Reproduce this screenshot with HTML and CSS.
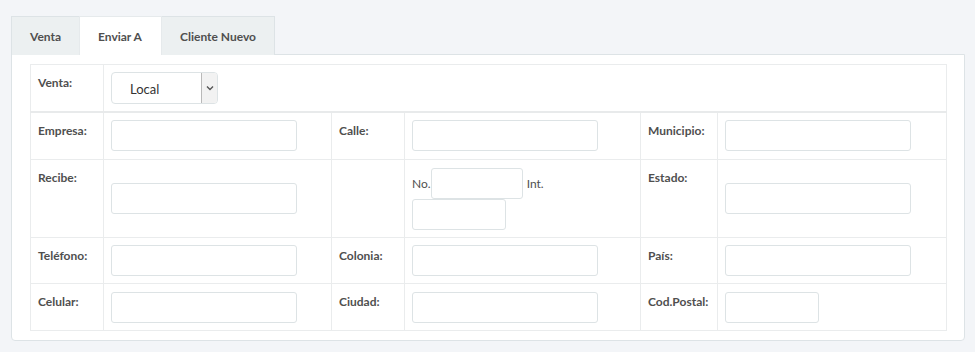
FILE: index.html
```html
<!DOCTYPE html>
<html lang="es">
<head>
  <meta charset="UTF-8" />
  <title>Enviar A</title>
  <link rel="stylesheet" href="styles.css">
</head>
<body>
  <div class="tabs">
    <div class="tab">Venta</div>
    <div class="tab active">Enviar A</div>
    <div class="tab">Cliente Nuevo</div>
  </div>

  <div class="panel">
    <table class="form-table">
      <colgroup>
        <col class="c-label">
        <col class="c-field">
        <col class="c-label">
        <col class="c-field2">
        <col class="c-label3">
        <col class="c-field3">
      </colgroup>
      <tr class="first">
        <td class="lbl">Venta:</td>
        <td colspan="5">
          <div class="select">
            <span class="select-value">Local</span>
            <span class="select-btn">
              <svg width="8" height="6" viewBox="0 0 8 6"><path d="M1 1.5 L4 4.5 L7 1.5" fill="none" stroke="#555" stroke-width="1.4"/></svg>
            </span>
          </div>
        </td>
      </tr>
      <tr class="r2">
        <td class="lbl">Empresa:</td>
        <td><input type="text" class="inp"></td>
        <td class="lbl">Calle:</td>
        <td><input type="text" class="inp"></td>
        <td class="lbl">Municipio:</td>
        <td><input type="text" class="inp"></td>
      </tr>
      <tr class="r3">
        <td class="lbl">Recibe:</td>
        <td><input type="text" class="inp"></td>
        <td class="lbl"></td>
        <td class="num">
          <div class="num-line">No.<input type="text" class="inp sm no">Int.</div>
          <input type="text" class="inp sm">
        </td>
        <td class="lbl">Estado:</td>
        <td><input type="text" class="inp"></td>
      </tr>
      <tr class="r4">
        <td class="lbl">Teléfono:</td>
        <td><input type="text" class="inp"></td>
        <td class="lbl">Colonia:</td>
        <td><input type="text" class="inp"></td>
        <td class="lbl">País:</td>
        <td><input type="text" class="inp"></td>
      </tr>
      <tr class="r5">
        <td class="lbl">Celular:</td>
        <td><input type="text" class="inp"></td>
        <td class="lbl">Ciudad:</td>
        <td><input type="text" class="inp"></td>
        <td class="lbl">Cod.Postal:</td>
        <td><input type="text" class="inp sm"></td>
      </tr>
    </table>
  </div>
</body>
</html>
```

FILE: styles.css
```css
body {
  margin: 0;
  padding: 16px 10px 0 11px;
  background: #f3f5f8;
  font-family: Lato, "Open Sans", sans-serif;
  font-size: 12px;
  color: #4f4f4f;
}
.tabs {
  display: flex;
  height: 38px;
}
.tab {
  box-sizing: border-box;
  height: 39px;
  padding: 12px 18px 0 18px;
  font-weight: bold;
  background: #ecf0f1;
  border: 1px solid #dde3e6;
  border-bottom: none;
  margin-right: -1px;
}
.tab:first-child { width: 69px; }
.tab.active {
  width: 83px;
  background: #fff;
  position: relative;
  z-index: 1;
  border-color: #e6eaec;
}
.tab:last-child { width: 114px; }
.panel {
  width: 954px;
  box-sizing: border-box;
  background: #fff;
  border: 1px solid #dde3e6;
  border-radius: 0 0 4px 4px;
  padding: 9px 18px 9px 18px;
  height: 287px;
}
.form-table {
  border-collapse: collapse;
  width: 916px;
  table-layout: fixed;
}
.c-label { width: 73px; }
.c-field { width: 228px; }
.c-field2 { width: 236px; }
.c-label3 { width: 77px; }
.c-field3 { width: 229px; }
.form-table td {
  border: 1px solid #eaeced;
  padding: 0 7px;
  vertical-align: middle;
}
.form-table td.lbl {
  vertical-align: top;
  padding-top: 10px;
  font-weight: bold;
  white-space: nowrap;
}
.first { height: 47px; }
.first td { border-bottom: 2px solid #e8eaeb; }
.r2 { height: 48px; }
.r3 { height: 78px; }
.r4 { height: 46px; }
.r5 { height: 47px; }
.inp {
  box-sizing: border-box;
  display: block;
  width: 186px;
  height: 31px;
  border: 1px solid #dde3e5;
  border-radius: 3px;
  margin: 0;
  background: #fff;
}
.inp.sm { width: 94px; }
.num-line {
  display: flex;
  align-items: center;
}
.inp.no {
  width: 92px;
  margin: 0 4px 0 0;
}
.select {
  display: flex;
  box-sizing: border-box;
  width: 107px;
  height: 32px;
  border: 1px solid #dde3e5;
  border-radius: 4px;
  overflow: hidden;
}
.select-value {
  flex: 1;
  padding: 8px 0 0 18px;
  color: #333;
  font-size: 13px;
}
.select-btn {
  width: 15px;
  display: flex;
  align-items: center;
  justify-content: center;
  background: #f2f2f2;
  border-left: 1px solid #b9b9b9;
}
```
